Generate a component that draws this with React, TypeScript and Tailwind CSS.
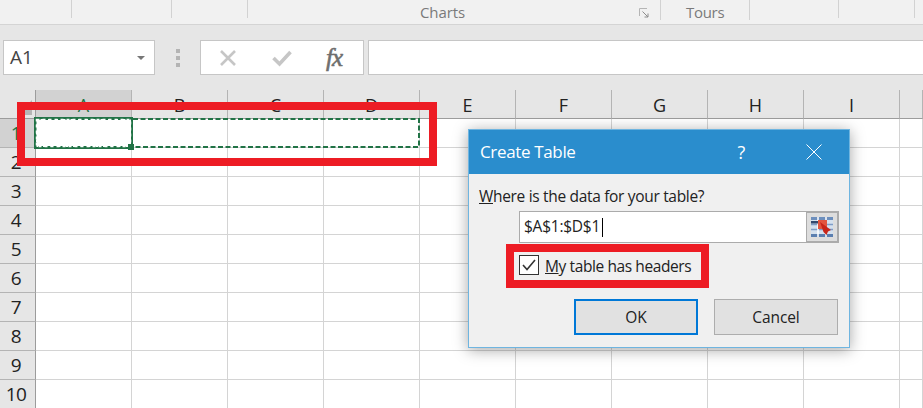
import React from 'react';

const columns = ['A', 'B', 'C', 'D', 'E', 'F', 'G', 'H', 'I', ''];
const rows = [1, 2, 3, 4, 5, 6, 7, 8, 9, 10];
const cellFont = { fontFamily: '"Open Sans", "Noto Sans", sans-serif' };

function RibbonStrip() {
  return (
    <div className="h-[25px] bg-[#f1f1f1] border-b border-[#d4d4d4] flex text-[#7a7a7a] text-[15px] tracking-[-0.1px] leading-[24px]">
      <div className="w-[72px] h-[18px] border-r border-[#d2d2d2]" />
      <div className="w-[100px] h-[18px] border-r border-[#d2d2d2]" />
      <div className="w-[76px] h-[18px] border-r border-[#d2d2d2]" />
      <div className="w-[413px] h-[20px] border-r border-[#d2d2d2] flex">
        <span className="ml-[172px]">Charts</span>
        <svg width="10" height="10" viewBox="0 0 10 10" className="ml-[174px] mt-[8px]" fill="none" stroke="#b5b5b5">
          <path d="M0.5 8V0.5H8" />
          <path d="M3.5 3.5L9 9M5.5 9H9V5.5" stroke="#8c8c8c" />
        </svg>
      </div>
      <div className="w-[89px] h-[20px] border-r border-[#d2d2d2] pl-[25px] tracking-[-0.3px]">Tours</div>
      <div className="w-[89px] h-[18px] border-r border-[#d2d2d2]" />
      <div className="w-[76px] h-[18px] border-r border-[#d2d2d2]" />
    </div>
  );
}

function FormulaBar() {
  return (
    <div className="h-[65px] bg-[#e6e6e6] pt-[15px] flex items-start">
      <div className="ml-[3px] w-[152px] h-[35px] bg-white border border-[#c6c6c6] flex items-center justify-between pl-[6px] pr-[9px]">
        <span className="text-[19px] text-[#444]">A1</span>
        <span className="w-0 h-0 border-x-[4px] border-x-transparent border-t-[4px] border-t-[#777]" />
      </div>
      <div className="w-[45px] h-[35px] flex flex-col items-center justify-center gap-[3px]">
        <span className="w-[4px] h-[4px] bg-[#b4b4b4]" />
        <span className="w-[4px] h-[4px] bg-[#b4b4b4]" />
        <span className="w-[4px] h-[4px] bg-[#b4b4b4]" />
      </div>
      <div className="w-[164px] h-[35px] bg-white border border-[#c6c6c6] flex items-center">
        <svg width="18" height="18" viewBox="0 0 18 18" className="ml-[18px]" stroke="#c6c6c6" strokeWidth="2.6" fill="none">
          <path d="M2 2L16 16M16 2L2 16" />
        </svg>
        <svg width="20" height="18" viewBox="0 0 20 18" className="ml-[35px]" stroke="#c6c6c6" strokeWidth="3.6" fill="none">
          <path d="M1.5 9L7.5 15L18.5 3" />
        </svg>
        <span
          className="ml-[34px] text-[25px] italic text-[#6f6f6f] leading-none tracking-[-1px]"
          style={{ fontFamily: '"Liberation Serif", serif', WebkitTextStroke: '0.6px #6f6f6f' }}
        >
          fx
        </span>
      </div>
      <div className="ml-[4px] flex-1 h-[35px] bg-white border border-[#c6c6c6] border-r-0" />
    </div>
  );
}

function SheetGrid() {
  return (
    <div className="grid grid-cols-[36px_repeat(9,96px)_1fr] auto-rows-[29px] bg-white" style={cellFont}>
      <div className="h-[29px] bg-[#e6e6e6] border-r border-b border-[#9c9c9c] relative">
        <span className="absolute right-[3px] bottom-[3px] w-0 h-0 border-l-[15px] border-l-transparent border-b-[15px] border-b-[#b5b5b5]" />
      </div>
      {columns.map((col) => (
        <div
          key={col}
          className={`h-[29px] pt-[2px] border-r border-b border-r-[#b4b4b4] border-b-[#9c9c9c] flex items-center justify-center text-[18px] ${
            col === 'A' ? 'bg-[#d2d2d2] text-[#217346]' : 'bg-[#e6e6e6] text-[#222]'
          }`}
        >
          {col}
        </div>
      ))}
      {rows.map((row) => (
        <React.Fragment key={row}>
          <div
            className={`pr-[3px] border-r border-b border-r-[#9c9c9c] border-b-[#b4b4b4] flex items-center justify-center text-[19px] tracking-[-0.5px] ${
              row === 1 ? 'bg-[#d2d2d2] text-[#217346]' : 'bg-[#e6e6e6] text-[#222]'
            }`}
          >
            {row}
          </div>
          {columns.map((col) => (
            <div key={col} className="border-r border-b border-[#d4d4d4]" />
          ))}
        </React.Fragment>
      ))}
    </div>
  );
}

function RangePicker() {
  return (
    <svg width="22" height="20" viewBox="0 0 22 20">
      <rect x="0" y="0" width="22" height="20" fill="#d5e1ee" />
      <rect x="0" y="0" width="22" height="3" fill="#6d8fbd" />
      <rect x="0" y="17" width="22" height="3" fill="#5b7fb0" />
      <path d="M0 7.5H22M0 12.5H22" stroke="#7f9dc6" strokeWidth="1.6" />
      <path d="M7 0V20M15 0V20" stroke="#fff" strokeWidth="1.5" />
      <rect x="0" y="4" width="7" height="2.5" fill="#31486e" />
      <rect x="7" y="3" width="9" height="9" fill="#e2553f" />
      <path d="M9 5L20 13L17 14.5L15.5 18L12.5 15Z" fill="#c8261a" />
    </svg>
  );
}

function CreateTableDialog() {
  return (
    <div
      className="absolute left-[468px] top-[129px] w-[382px] h-[219px] bg-[#f0f0f0] border border-[#6fb5e0] shadow-[0_2px_14px_rgba(0,0,0,0.35)] flex flex-col"
      style={cellFont}
    >
      <div className="h-[44px] bg-[#2a8dcd] flex items-center text-white">
        <span className="ml-[11px] text-[17px] tracking-[-0.35px]">Create Table</span>
        <span className="ml-[162px] text-[18px]">?</span>
        <svg width="16" height="16" viewBox="0 0 16 16" className="ml-[61px]" stroke="#fff" fill="none">
          <path d="M0.5 0.5L15.5 15.5M15.5 0.5L0.5 15.5" />
        </svg>
      </div>
      <div className="pl-[10px] pt-[12px] text-[15.5px] tracking-[-0.32px] leading-[21px] text-[#222]">
        <u>W</u>here is the data for your table?
      </div>
      <div className="ml-[50px] mt-[4px] w-[320px] h-[32px] flex">
        <div className="flex-1 bg-white border border-[#ababab] flex items-center pl-[4px] text-[15.5px] tracking-[-0.25px] text-[#222]">
          $A$1:$D$1
          <span className="ml-[2px] w-px h-[19px] bg-black" />
        </div>
        <div className="w-[32px] bg-[#dddddd] border-2 border-l-0 border-[#ababab] flex items-center justify-center">
          <RangePicker />
        </div>
      </div>
      <div className="ml-[50px] mt-[12px] h-[20px] flex items-center text-[15.5px] tracking-[-0.4px] text-[#222]">
        <span className="w-[20px] h-[20px] border border-[#333] bg-white flex items-center justify-center">
          <svg width="14" height="12" viewBox="0 0 14 12" fill="none" stroke="#333" strokeWidth="1.6">
            <path d="M1 6L5 10.5L13 1" />
          </svg>
        </span>
        <span className="ml-[6px] pt-[3px]">
          <u>M</u>y table has headers
        </span>
      </div>
      <div className="ml-[105px] mt-[24px] flex gap-[16px] text-[15.5px] tracking-[-0.1px] text-[#222]">
        <button className="w-[124px] h-[36px] pt-[2px] bg-[#e1e1e1] border-2 border-[#0078d7]">OK</button>
        <button className="w-[124px] h-[36px] pt-[2px] bg-[#e1e1e1] border border-[#adadad]">Cancel</button>
      </div>
    </div>
  );
}

export default function App() {
  return (
    <div className="relative w-[923px] h-[408px] overflow-hidden bg-white" style={cellFont}>
      <RibbonStrip />
      <FormulaBar />
      <SheetGrid />

      {/* Copied range and active cell */}
      <svg className="absolute left-[34px] top-[117px]" width="388" height="34" viewBox="0 0 388 34" fill="none">
        <rect x="1.5" y="2" width="383.5" height="28" stroke="#217346" strokeWidth="2" strokeDasharray="5 2.5" />
        <rect x="1" y="1" width="97" height="30" stroke="#217346" strokeWidth="2" />
        <rect x="2.5" y="2.5" width="94" height="27" stroke="#fff" strokeWidth="1.5" strokeDasharray="3 3" />
        <rect x="94" y="27" width="6" height="6" fill="#217346" />
      </svg>

      <CreateTableDialog />

      {/* Red callouts */}
      <div className="absolute left-[17px] top-[102px] w-[420px] h-[64px] border-[8px] border-[#ed1c24]" />
      <div className="absolute left-[506px] top-[244px] w-[203px] h-[44px] border-[8px] border-[#ed1c24]" />
    </div>
  );
}
